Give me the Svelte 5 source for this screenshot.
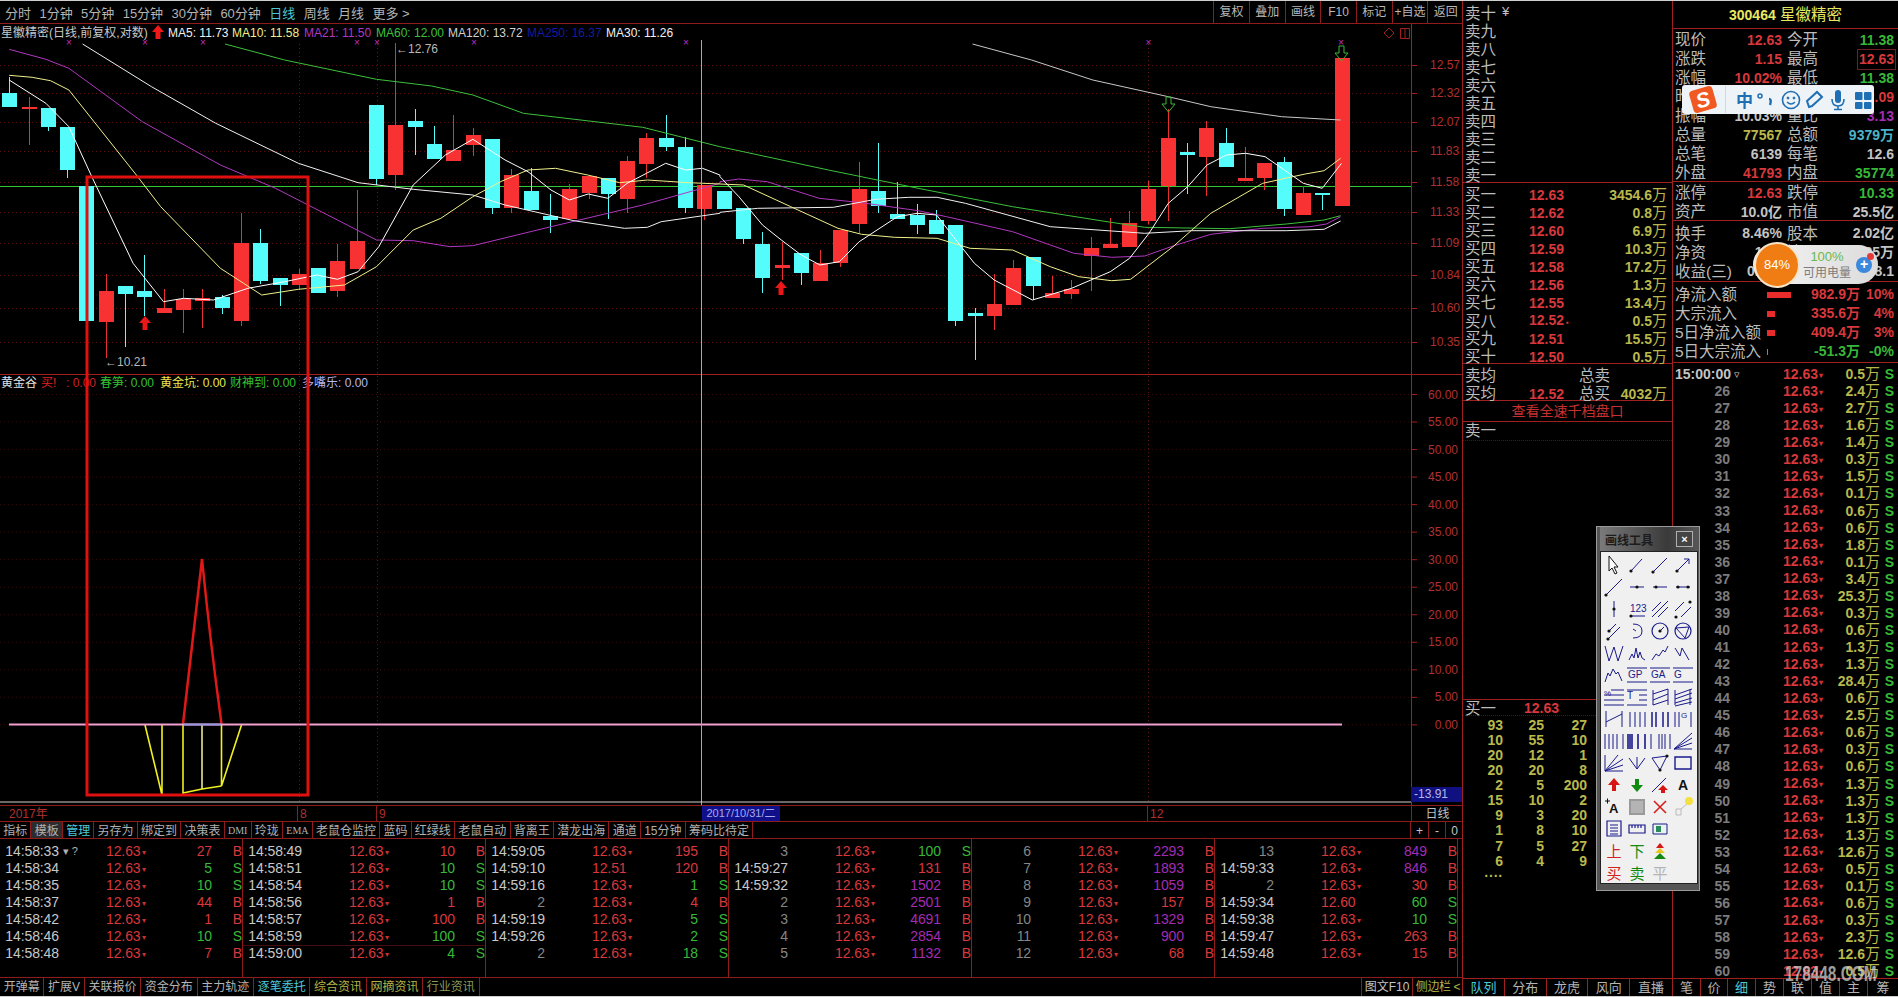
<script>
  // candles: [wickTop, wickBottom, bodyTop, bodyBottom, colour] in page px, one every 19.31px
  const candles = [
    [77,107,93,107,'c'],[97,145,107,109,'r'],[108,131,108,127,'c'],[127,178,127,170,'c'],[186,321,186,321,'c'],
    [274,358,291,322,'r'],[286,347,286,294,'c'],[255,316,291,297,'c'],[289,313,308,313,'r'],[289,333,299,310,'r'],
    [289,328,298,301,'r'],[295,314,297,308,'c'],[213,326,243,321,'r'],[229,284,243,281,'c'],[278,306,278,285,'c'],
    [269,290,274,285,'r'],[268,293,268,293,'c'],[244,297,261,291,'r'],[190,269,241,269,'r'],[105,185,105,179,'c'],
    [43,190,125,175,'r'],[109,155,121,127,'c'],[126,159,144,159,'c'],[115,161,150,161,'r'],[128,156,135,145,'r'],
    [139,214,139,208,'c'],[169,213,175,208,'r'],[168,210,191,210,'c'],[194,233,216,220,'c'],[184,220,189,219,'r'],
    [176,199,176,193,'r'],[178,219,178,194,'c'],[156,213,161,199,'r'],[133,178,138,164,'r'],[115,151,138,147,'c'],
    [137,213,147,208,'c'],[185,220,185,209,'r'],[191,209,191,209,'c'],[208,244,208,239,'c'],[232,293,244,278,'c'],
    [242,280,265,268,'r'],[253,285,253,273,'c'],[250,281,263,281,'r'],[230,267,230,263,'r'],[162,233,189,224,'r'],
    [143,213,191,206,'c'],[182,219,214,219,'c'],[204,234,215,225,'c'],[210,234,220,234,'c'],[225,326,225,321,'c'],
    [308,360,313,316,'c'],[274,330,304,316,'r'],[260,305,268,305,'r'],[257,300,257,286,'c'],[276,298,293,298,'r'],
    [280,299,289,294,'r'],[237,291,248,256,'r'],[218,248,244,248,'r'],[211,247,223,247,'r'],[181,224,189,221,'r'],
    [109,221,138,186,'r'],[143,194,152,155,'c'],[121,196,128,157,'r'],[128,167,143,167,'c'],[147,181,178,181,'r'],
    [163,190,163,178,'r'],[157,216,162,209,'c'],[186,215,193,215,'r'],[193,210,193,194,'c'],[58,206,58,206,'r']
  ];
  const candleX = (i) => 9.2 + i * 19.31;

  // moving averages, traced from the reference. left half / right half have different crop scales
  const a = (p) => p.map(([x, y]) => `${(x / 2.178).toFixed(1)},${(y / 3).toFixed(1)}`).join(' ');
  const b = (p) => p.map(([x, y]) => `${(720 + x / 2.119).toFixed(1)},${(y / 3).toFixed(1)}`).join(' ');
  const averages = [
    { color: '#3cc03c', pts: a([[490,132],[620,180],[820,238],[940,258],[1030,285],[1140,340],[1400,382],[1568,440]]) + ' ' + b([[0,440],[230,510],[420,565],[620,620],[820,665],[900,682],[1080,686],[1200,672],[1280,660],[1315,647]]) },
    { color: '#b038c0', pts: a([[20,148],[100,178],[150,205],[310,365],[480,495],[600,565],[820,720],[900,722],[980,740],[1030,737],[1200,680],[1400,615],[1568,550]]) + ' ' + b([[0,545],[40,537],[100,545],[210,595],[300,608],[420,632],[480,650],[620,695],[750,760],[830,772],[900,768],[960,738],[1040,703],[1150,685],[1250,680],[1285,672],[1315,650]]) },
    { color: '#f0f0f0', pts: a([[180,132],[330,260],[470,370],[650,490],[780,548],[900,568],[1030,585],[1100,615],[1250,662],[1360,685],[1410,682],[1440,665],[1568,640]]) + ' ' + b([[0,637],[80,625],[240,622],[330,598],[400,592],[460,592],[520,610],[700,680],[900,700],[1000,692],[1100,692],[1200,692],[1280,688],[1315,663]]) },
    { color: '#c8c8c8', pts: b([[535,132],[660,180],[790,240],[950,290],[1040,320],[1190,350],[1315,360]]) },
    { color: '#f0f08c', pts: a([[20,226],[70,232],[110,242],[150,270],[300,530],[350,620],[480,805],[570,885],[650,868],[750,855],[820,800],[900,690],[960,655],[1030,590],[1090,545],[1150,510],[1210,505],[1280,525],[1350,548],[1410,540],[1500,548],[1568,552]]) + ' ' + b([[0,552],[50,555],[150,620],[250,685],[300,703],[370,712],[460,715],[530,745],[620,750],[700,800],[760,830],[830,842],[870,838],[960,740],[1040,640],[1150,550],[1240,522],[1280,512],[1315,475]]) },
    { color: '#ffffff', pts: a([[20,240],[100,310],[150,380],[200,530],[290,790],[356,905],[400,895],[465,900],[540,865],[620,845],[690,825],[735,838],[780,815],[825,740],[900,555],[970,465],[1030,418],[1100,480],[1150,515],[1200,570],[1240,600],[1281,582],[1324,595],[1366,550],[1408,520],[1450,490],[1493,510],[1530,505],[1568,525]]) + ' ' + b([[0,530],[40,590],[90,675],[130,720],[172,765],[212,795],[253,785],[295,725],[376,650],[418,640],[459,645],[500,720],[539,790],[581,840],[662,900],[745,865],[827,815],[868,775],[909,700],[950,610],[991,560],[1032,495],[1073,465],[1114,460],[1155,470],[1196,510],[1236,550],[1276,565],[1317,490]]) }
  ];

  const priceAxis = [['12.57',65],['12.32',93],['12.07',122],['11.83',151],['11.58',182],['11.33',212],['11.09',243],['10.84',275],['10.60',308],['10.35',342]];
  const lowerAxis = ['60.00','55.00','50.00','45.00','40.00','35.00','30.00','25.00','20.00','15.00','10.00','5.00','0.00'];
  const marks = [69,145,203,357,377,474,686,1148.5,1341];
  const legend = [
    ['MA5: 11.73','#f2f2f2',168],['MA10: 11.58','#f0f08c',232],['MA21: 11.50','#b038c0',304],['MA60: 12.00','#3cc03c',376],
    ['MA120: 13.72','#d0d0d0',448],['MA250: 16.37','#101ca8',527],['MA30: 11.26','#f2f2f2',606]
  ];

  const periods = [['分时'],['1分钟'],['5分钟'],['15分钟'],['30分钟'],['60分钟'],['日线',true],['周线'],['月线'],['更多 >']];
  const actions = ['复权','叠加','画线','F10','标记','+自选','返回'];
  const tools = [['指标'],['模板',0,'on'],['管理',0,'cyan'],['另存为'],['绑定到'],['决策表'],['DMI',1],['玲珑'],['EMA',1],['老鼠仓监控'],['蓝码'],['红绿线'],['老鼠自动'],['背离王'],['潜龙出海'],['通道'],['15分钟'],['筹码比待定']];
  const infoTabs = [['开弹幕',''],['扩展V',''],['关联报价',''],['资金分布',''],['主力轨迹',''],['逐笔委托','cyan'],['综合资讯','olive'],['网摘资讯','olive'],['行业资讯','olive2']];

  // time, price, volume, side
  const P = '12.63';
  const trades = [
    [['14:58:33',P,27,'B','▾ ?'],['14:58:34',P,5,'S'],['14:58:35',P,10,'S'],['14:58:37',P,44,'B'],['14:58:42',P,1,'B'],['14:58:46',P,10,'S'],['14:58:48',P,7,'B']],
    [['14:58:49',P,10,'B'],['14:58:51',P,10,'S'],['14:58:54',P,10,'S'],['14:58:56',P,1,'B'],['14:58:57',P,100,'B'],['14:58:59',P,100,'S','','dot'],['14:59:00',P,4,'S']],
    [['14:59:05',P,195,'B'],['14:59:10','12.51',120,'B'],['14:59:16',P,1,'S'],['2',P,4,'B'],['14:59:19',P,5,'S'],['14:59:26',P,2,'S'],['2',P,18,'S']],
    [['3',P,100,'S'],['14:59:27',P,131,'B'],['14:59:32',P,1502,'B'],['2',P,2501,'B'],['3',P,4691,'B'],['4',P,2854,'B'],['5',P,1132,'B']],
    [['6',P,2293,'B'],['7',P,1893,'B'],['8',P,1059,'B'],['9',P,157,'B'],['10',P,1329,'B'],['11',P,900,'B'],['12',P,68,'B']],
    [['13',P,849,'B'],['14:59:33',P,846,'B'],['2',P,30,'B'],['14:59:34','12.60',60,'S'],['14:59:38',P,10,'S'],['14:59:47',P,263,'B'],['14:59:48',P,15,'B']]
  ];
  const volClass = (v, s) => (s === 'S' ? 'green' : v >= 500 ? 'purple' : 'red');

  const sells = ['卖十','卖九','卖八','卖七','卖六','卖五','卖四','卖三','卖二','卖一'];
  const buys = [['买一','12.63','3454.6'],['买二','12.62','0.8'],['买三','12.60','6.9'],['买四','12.59','10.3'],['买五','12.58','17.2'],['买六','12.56','1.3'],['买七','12.55','13.4'],['买八','12.52','0.5'],['买九','12.51','15.5'],['买十','12.50','0.5']];
  const queue = [[93,25,27],[10,55,10],[20,12,1],[20,20,8],[2,5,200],[15,10,2],[9,3,20],[1,8,10],[7,5,27],[6,4,9]];

  const quote = [
    ['现价','12.63','red','今开','11.38','green'],['涨跌','1.15','red','最高','12.63','red boxed'],['涨幅','10.02%','red','最低','11.38','green'],
    ['昨收','11.48','light','均价','12.09','red'],['振幅','10.03%','light','量比','3.13','purple'],['总量','77567','yellow','总额','9379万','cyan'],
    ['总笔','6139','light','每笔','12.6','light'],['外盘','41793','red','内盘','35774','green']
  ];
  const limits = [['涨停','12.63','red','跌停','10.33','green'],['资产','10.0亿','light','市值','25.5亿','light']];
  const ratios = [['换手','8.46%','light','股本','2.02亿','light'],['净资','1.98','light','流通','1.35万','light'],['收益(三)','0.247','light','市盈','38.1','light']];
  const flows = [['净流入额',24,'982.9万','10%','red'],['大宗流入',8,'335.6万','4%','red'],['5日净流入额',8,'409.4万','3%','red'],['5日大宗流入',1,'-51.3万','-0%','green']];

  const ticks = [0.5,2.4,2.7,1.6,1.4,0.3,1.5,0.1,0.6,0.6,1.8,0.1,3.4,25.3,0.3,0.6,1.3,1.3,28.4,0.6,2.5,0.6,0.3,0.6,1.3,1.3,1.3,1.3,12.6,0.5,0.1,0.6,0.3,2.3,12.6,0.5];
  const sideTabs = [['队列',42,1],['分布',42],['龙虎',42],['风向',42],['直播',43],['笔',28],['价',27],['细',28,1],['势',28],['联',28],['值',28],['主',28],['筹',31]];

  // drawing palette, 4 columns by 15 rows
  const ink = '#1a1a8c';
  const icons = [
    [{ d:'M-5,-9V6L-2,3L1,9L3,8L0,2H4Z', stroke:'#111', fill:'#fff' }, { d:'M-6,6L5,-6', dots:[[-6,6]] }, { d:'M-7,7L7,-7', dots:[[-7,7]] }, { d:'M-6,6L6,-6M1,-6H6V-1', dots:[[-6,6]] }],
    [{ d:'M-8,8L8,-8', dots:[[-8,8]] }, { d:'M-7,0H7', dots:[[0,0]] }, { d:'M-7,0H7', dots:[[-4,0]] }, { d:'M-7,0H7', dots:[[-5,0],[5,0]] }],
    [{ d:'M0,-8V8', dots:[[0,0]] }, { d:'M-6,7H8', dots:[[-6,7]], txt:'123', tx:-7, ty:3, ts:10 }, { d:'M-8,2L1,-7M-8,8L8,-8M-2,8L8,-2' }, { d:'M-8,2L1,-7M-2,8L8,-2', dots:[[-7,8],[7,-7]] }],
    [{ d:'M-6,1L2,-7M-6,8L6,-4', dots:[[-6,8],[-5,0]] }, { d:'M-4,-7Q5,-7 5,0Q5,7 -4,7M-4,-2L-1,0' }, { d:'M0,0L4,-4', circle:8, dots:[[0,0]] }, { d:'M-7,-3L6,-4L2,7Z', circle:8 }],
    [{ d:'M-9,-7L-5,8L0,-6L4,8L9,-7' }, { d:'M-8,7L-5,1L-3,5L-1,-5L1,5L3,-1L5,5L8,7' }, { d:'M-8,7L-4,1L-1,3L3,-3L5,-1L8,-7' }, { d:'M-8,-5L-3,3L-1,-5L6,7' }],
    [{ d:'M-9,7L-6,-2L-4,1L-1,-6L2,-1L4,-3L8,6' }, { d:'M-10,-7H10M-10,7H10', txt:'GP', tx:-9, ty:3, ts:10 }, { d:'M-10,-7H10M-10,7H10', txt:'GA', tx:-9, ty:3, ts:10 }, { d:'M-10,-7H10M-10,7H10', txt:'G', tx:-9, ty:3, ts:10 }],
    [{ d:'M-10,-2H10M-10,3H10M-10,8H10M-3,-7H10', txt:'%', tx:-10, ty:-1, ts:8 }, { d:'M-10,-7H10M-10,8H10M2,-2H10M2,3H10', txt:'T', tx:-10, ty:2, ts:10 }, { d:'M-7,-7V8M8,-8V8M-7,-3L8,-8M-7,3L8,-3M-7,8L8,3' }, { d:'M-8,-7V8M7,-8V8M-8,-2L9,-8M-8,2L9,-4M-8,6L9,1M-8,9L9,5' }],
    [{ d:'M-8,-8V8M8,-8V8M-8,3L8,-5' }, { d:'M-7,-7V8M-2,-7V8M3,-7V8M8,-7V8' }, { d:'M-8,-7V8M-4,-7V8M3,-7V8M8,-7V8', w:1.5 }, { d:'M-8,-7V8M-4,-7V8M8,-7V8', txt:'G', tx:-2, ty:-1, ts:8 }],
    [{ d:'M-9,-7V8M-5,-7V8M-1,-7V8M3,-7V8M9,-7V8' }, { d:'M-9,-7V8M-7,-7V8M-5,-7V8M1,-7V8M8,-7V8', w:1.6 }, { d:'M-9,-7V8M-1,-7V8M2,-7V8M5,-7V8M10,-7V8' }, { d:'M-9,8L9,-8M-9,8L9,-3M-9,8L9,2M-9,8H9' }],
    [{ d:'M-9,-8V8H9M-9,8L4,-8M-9,8L9,-4M-9,8L9,2' }, { d:'M-8,-5L0,6L8,-5M0,6V-6' }, { d:'M-8,-5L7,-7L0,7Z', dots:[[7,-7],[0,7]] }, { d:'M-8,-6H8V6H-8Z', w:1.4 }],
    [{ d:'M0,-7L6,0H2V6H-2V0H-6Z', stroke:'none', fill:'#d81414' }, { d:'M0,7L6,0H2V-6H-2V0H-6Z', stroke:'none', fill:'#128a12' }, { d:'M-8,7L6,-7', red:'M3,0L8,5H5V8H1V5H-2Z' }, { txt:'A', tx:-5, ty:5, ts:14, color:'#111', bold:1 }],
    [{ d:'M-9,-6H-4M-6.5,-8.5V-3.5', stroke:'#111', txt:'A', tx:-5, ty:6, ts:13, color:'#111', bold:1 }, { d:'M-7,-7H7V7H-7Z', stroke:'#9a9a9a', fill:'#b4b4b4', w:2 }, { d:'M-6,-6L6,6M6,-6L-6,6', stroke:'#d42020', w:1.6 }, { d:'M-7,2H-2V8H-7ZM-2,2L5,-4', stroke:'#bbb', yellow:1 }],
    [{ d:'M-7,-8H7V7H-7ZM-4,-4H4M-4,-1H4M-4,2H4M-4,5H4', w:1.2 }, { d:'M-8,-4H8V4H-8ZM-5,-4V-1M-2,-4V-1M1,-4V-1M4,-4V-1', w:1.2 }, { d:'M-7,-5H7V5H-7Z', stroke:'#1a1a8c', fill:'#e8f4ee', inner:1 }, {}],
    [{ cjk:'上', color:'#d42020' }, { cjk:'下', color:'#128a12' }, { tri:1 }, {}],
    [{ cjk:'买', color:'#d42020' }, { cjk:'卖', color:'#128a12' }, { cjk:'平', color:'#b4b4b4' }, {}]
  ];
</script>

<div class="app">
  <div class="left">
    <div class="toolbar">
      <div class="periods">
        {#each periods as [label, active]}<span class:cyan={active}>{label}</span>{/each}
      </div>
      <div class="actions">
        {#each actions as label}<span>{label}</span>{/each}
      </div>
    </div>

    <svg class="chart" viewBox="0 24 1463 781" width="1463" height="781" role="img" aria-label="K线图">
      <!-- price grid -->
      {#each priceAxis as [label, y]}
        <line x1="0" x2="1411" y1={y + 0.5} y2={y + 0.5} class="grid" />
        <line x1="1411" x2="1417" y1={y + 0.5} y2={y + 0.5} class="axis" />
        <text x="1430" y={y + 4} class="tick">{label}</text>
      {/each}
      {#each lowerAxis as label, i}
        <line x1="0" x2="1411" y1={394.5 + i * 27.53} y2={394.5 + i * 27.53} class="grid faint" />
        <line x1="1411" x2="1417" y1={394.5 + i * 27.53} y2={394.5 + i * 27.53} class="axis" />
        <text x="1458" y={398.5 + i * 27.53} class="tick end">{label}</text>
      {/each}
      {#each [299.5, 377.5, 1148.5] as x}
        <line x1={x} x2={x} y1="44" y2="804" class="grid vert" />
      {/each}

      <line x1="0" x2="1411" y1="186.5" y2="186.5" stroke="#32c832" stroke-width="1" />

      {#each candles as [wt, wb, bt, bb, c], i}
        {@const x = candleX(i)}
        <line x1={Math.round(x) + 0.5} x2={Math.round(x) + 0.5} y1={wt} y2={wb} class={c === 'c' ? 'wick-c' : 'wick-r'} />
        <rect x={Math.round(x) - 7} y={bt} width="15" height={Math.max(bb - bt, 2)} fill={c === 'c' ? '#54fcfc' : '#f83232'} />
      {/each}

      {#each averages as line}
        <polyline points={line.pts} fill="none" stroke={line.color} stroke-width="1" stroke-linejoin="round" />
      {/each}

      {#each marks as x}
        <text x={x} y="46" class="mark">×</text>
      {/each}

      <!-- signal arrows -->
      <path d="M158,25l6,7h-3.5v7h-5v-7h-3.5z" fill="#f01818" />
      <path d="M145,316l6,7h-3.5v7h-5v-7h-3.5z" fill="#e81818" />
      <path d="M781,281l6,7h-3.5v7h-5v-7h-3.5z" fill="#e81818" />
      <path d="M1166,97h5v7h4l-6.5,8l-6.5,-8h4z" fill="none" stroke="#38b838" />
      <path d="M1339,46h5v7h4l-6.5,8l-6.5,-8h4z" fill="none" stroke="#38b838" />

      <text x="396" y="53" class="note">←12.76</text>
      <text x="105" y="366" class="note">←10.21</text>

      <text x="1" y="37" class="title">星徽精密(日线,前复权,对数)</text>
      {#each legend as [label, color, x]}
        <text x={x} y="37" class="legend" fill={color}>{label}</text>
      {/each}
      <path d="M1389,28l5,5l-5,5l-5,-5z" fill="none" stroke="#a02020" />
      <path d="M1400.5,28.5h9v10h-9zM1405,28.5v10" fill="none" stroke="#a02020" />

      <!-- panel split -->
      <line x1="0" x2="1463" y1="374.5" y2="374.5" class="axis" />
      <line x1="1411.5" x2="1411.5" y1="24" y2="805" class="axis" />

      <text x="1" y="387" class="sub" fill="#e4e4e4">黄金谷</text>
      <text x="41" y="387" class="sub" fill="#e02020">买!</text>
      <text x="66" y="387" class="legend" fill="#d02020">: 0.00</text>
      <text x="100" y="387" class="sub" fill="#34c034">春笋<tspan class="legend">: 0.00</tspan></text>
      <text x="160" y="387" class="sub" fill="#e8e850">黄金坑<tspan class="legend">: 0.00</tspan></text>
      <text x="230" y="387" class="sub" fill="#34c034">财神到<tspan class="legend">: 0.00</tspan></text>
      <text x="302" y="387" class="sub" fill="#b8b8f0">多嘴乐<tspan class="legend">: 0.00</tspan></text>

      <!-- indicator -->
      <path d="M183,724Q193,640 202,559Q210,640 221.5,724" fill="none" stroke="#e01818" stroke-width="2.5" />
      <g fill="none" stroke="#f0f020" stroke-width="1.6">
        <path d="M145,725L162,795V725" />
        <path d="M183,725V794" />
        <path d="M202,725V789" stroke="#e8e890" />
        <path d="M221.5,725V786L241.5,725" />
        <path d="M183,793L202,789L221.5,786" />
      </g>
      <line x1="9" x2="1342" y1="724.5" y2="724.5" stroke="#f0a0d0" stroke-width="2" />
      <line x1="184" x2="221" y1="724.5" y2="724.5" stroke="#9898e0" stroke-width="2" />

      <line x1="701.5" x2="701.5" y1="40" y2="805" stroke="#a8a8a8" />
      <line x1="0" x2="1411" y1="802" y2="802" stroke="#d0d0d0" />
      <rect x="1411" y="787" width="52" height="15" fill="#101080" />
      <text x="1414" y="798" class="tick box-tick">-13.91</text>

      <!-- hand drawn box from whoever took this screenshot -->
      <rect x="87" y="177" width="221" height="618" fill="none" stroke="#e01010" stroke-width="3" />
    </svg>

    <div class="dates">
      <span class="year">2017年</span>
      <span class="mon m8">8</span>
      <span class="mon m9">9</span>
      <span class="cursor-date">2017/10/31/二</span>
      <span class="mon m12">12</span>
      <span class="unit">日线</span>
    </div>

    <div class="tools">
      <div class="tool-list">
        {#each tools as [label, small, kind]}
          <span class={kind} class:small>{label}</span>
        {/each}
      </div>
      <div class="zoom-btns"><span>+</span><span>-</span><span>0</span></div>
    </div>

    <div class="trades">
      {#each trades as col}
        <div class="trade-col">
          {#each col as [time, price, vol, side, extra, dot]}
            <div class="trade" class:dot>
              <span class={time.length < 8 ? 'seq' : 'time'}>{time}</span>
              <span class="extra">{extra || ''}</span>
              <span class="red price">{price}{#if price === P}<i>▾</i>{/if}</span>
              <span class="vol {volClass(vol, side)}">{vol}</span>
              <span class="side {side === 'S' ? 'green' : 'red'}">{side}</span>
            </div>
          {/each}
        </div>
      {/each}
    </div>

    <div class="foot">
      <div class="foot-tabs">
        {#each infoTabs as [label, kind]}<span class={kind}>{label}</span>{/each}
      </div>
      <div class="foot-right"><span>图文F10</span><span class="olive side-toggle">侧边栏 &lt;</span></div>
    </div>
  </div>

  <div class="mid">
    <div class="sell-rows">
      {#each sells as s, i}
        <div class="book-row"><span class="cn">{s}</span>{#if i === 0}<span class="yen">¥</span>{/if}</div>
      {/each}
    </div>
    <div class="buy-rows">
      {#each buys as [label, price, vol], i}
        <div class="book-row">
          <span class="cn">{label}</span>
          <span class="num red">{price}{#if i === 7}<i class="pip">▪</i>{/if}</span>
          <span class="num yellow amount">{vol}<b>万</b></span>
        </div>
      {/each}
    </div>
    <div class="totals">
      <div class="book-row"><span class="cn">卖均</span><span></span><span class="cn tot">总卖</span></div>
      <div class="book-row">
        <span class="cn">买均</span><span class="num red">12.52</span>
        <span class="cn tot">总买<span class="num yellow">4032<b>万</b></span></span>
      </div>
    </div>
    <div class="full-depth">查看全速千档盘口</div>
    <div class="sell-one"><span class="cn">卖一</span></div>
    <div class="spacer"></div>
    <div class="buy-one"><span class="cn">买一</span><span class="num red">12.63</span></div>
    <div class="queue">
      {#each queue as row}
        {#each row as n}<span class="num yellow">{n}</span>{/each}
      {/each}
      <span class="num yellow">····</span>
    </div>
    <div class="mid-foot">
      {#each sideTabs.slice(0, 5) as [label, w, on]}<span class:cyan={on} style="width:{w - 1}px">{label}</span>{/each}
    </div>
  </div>

  <div class="right">
    <div class="stock"><b>300464</b> 星徽精密</div>
    <div class="block quote">
      {#each quote as [l1, v1, c1, l2, v2, c2]}
        <div class="stat"><span class="cn">{l1}</span><span class="num {c1}">{v1}</span><span class="cn l2">{l2}</span><span class="num {c2}">{v2}</span></div>
      {/each}
    </div>
    <div class="block">
      {#each limits as [l1, v1, c1, l2, v2, c2]}
        <div class="stat"><span class="cn">{l1}</span><span class="num {c1}">{v1}</span><span class="cn l2">{l2}</span><span class="num {c2}">{v2}</span></div>
      {/each}
    </div>
    <div class="block pad">
      {#each ratios as [l1, v1, c1, l2, v2, c2]}
        <div class="stat"><span class="cn">{l1}</span><span class="num {c1}">{v1}</span><span class="cn l2">{l2}</span><span class="num {c2}">{v2}</span></div>
      {/each}
    </div>
    <div class="block pad flows">
      {#each flows as [label, w, val, pct, c]}
        <div class="flow">
          <span class="cn">{label}</span>
          <span class="flow-mid"><i class="bar {c}-bar" style="width:{w}px"></i><span class="num {c}">{val}</span></span>
          <span class="num {c}">{pct}</span>
        </div>
      {/each}
    </div>
    <div class="ticks">
      {#each ticks as v, i}
        <div class="tick-row">
          {#if i === 0}<span class="num light">15:00:00</span><span class="tri">▿</span>
          {:else}<span class="num seq2">{i + 25}</span><span></span>{/if}
          <span class="num red">12.63<i>▾</i></span>
          <span class="num yellow">{v}<b>万</b></span>
          <span class="num green">S</span>
        </div>
      {/each}
    </div>
    <div class="right-foot">
      {#each sideTabs.slice(5) as [label, w, on]}<span class:cyan={on} style="width:{w - 1}px">{label}</span>{/each}
    </div>
  </div>

  <!-- drawing palette window -->
  <div class="palette">
    <div class="pal-title"><span>画线工具</span><button aria-label="关闭">×</button></div>
    <svg class="pal-icons" width="96" height="331" viewBox="0 0 96 331">
      {#each icons as row, r}
        {#each row as ic, c}
          <g transform="translate({13 + c * 23},{13 + r * 22})">
            {#if ic.circle}<circle r={ic.circle} fill="none" stroke={ink} stroke-width="1.2" />{/if}
            {#if ic.d}<path d={ic.d} fill={ic.fill || 'none'} stroke={ic.stroke || ink} stroke-width={ic.w || 1} />{/if}
            {#each ic.dots || [] as [dx, dy]}<circle cx={dx} cy={dy} r="1.6" fill="#111" />{/each}
            {#if ic.txt}<text x={ic.tx} y={ic.ty} font-size={ic.ts} fill={ic.color || ink} font-weight={ic.bold ? 700 : 400} class="pal-txt">{ic.txt}</text>{/if}
            {#if ic.red}<path d={ic.red} fill="#d81414" />{/if}
            {#if ic.yellow}<circle cx="6" cy="-6" r="4" fill="#f4e040" />{/if}
            {#if ic.inner}<rect x="-4" y="-3" width="5" height="6" fill="#2a8a5a" />{/if}
            {#if ic.cjk}<text x="0" y="6" font-size="15" fill={ic.color} text-anchor="middle" class="pal-txt">{ic.cjk}</text>{/if}
            {#if ic.tri}
              <path d="M0,-8L4,-3H-4Z" fill="#d81414" /><path d="M0,-3L5,2H-5Z" fill="#e8c820" /><path d="M0,2L6,8H-6Z" fill="#128a12" />
            {/if}
          </g>
        {/each}
      {/each}
    </svg>
  </div>

  <!-- input method bar -->
  <div class="ime">
    <span class="ime-logo"><b>S</b></span>
    <span class="ime-sep"></span>
    <span class="ime-zh">中</span>
    <svg width="192" height="29" viewBox="0 0 192 29" class="ime-icons">
      <g fill="#1f6fb4" stroke="#1f6fb4">
        <circle cx="78" cy="11" r="2" fill="none" stroke-width="1.5" />
        <path d="M87,14q3,0 1,6" fill="none" stroke-width="2.4" />
        <circle cx="109" cy="15" r="8.5" fill="none" stroke-width="1.6" />
        <circle cx="106" cy="13" r="1" /><circle cx="112" cy="13" r="1" />
        <path d="M105,17q4,4 8,0" fill="none" stroke-width="1.3" />
        <path d="M127,22l-2,-6l10,-9l5,5l-10,9z" fill="none" stroke-width="2" />
        <rect x="153" y="5" width="6" height="13" rx="3" stroke="none" />
        <path d="M150,14q0,7 6,7q6,0 6,-7M156,21v3M152,24.5h8" fill="none" stroke-width="1.6" />
        <rect x="173" y="7" width="7.5" height="8" rx="1" stroke="none" />
        <rect x="182" y="7" width="7.5" height="8" rx="1" stroke="none" />
        <rect x="173" y="17" width="7.5" height="7" rx="1" stroke="none" />
        <rect x="182" y="17" width="7.5" height="7" rx="1" stroke="none" />
      </g>
    </svg>
  </div>

  <!-- battery popup -->
  <div class="battery">
    <div class="bat-ring">84%</div>
    <div class="bat-text"><span class="bat-full">100%</span><span class="bat-label">可用电量</span></div>
    <div class="bat-plus">+<i></i></div>
  </div>

  <div class="watermark">178448.COM</div>
</div>

<style>
  :global(body) {
    margin: 0;
    background: #000;
  }

  .app {
    position: relative;
    display: grid;
    grid-template-columns: 1462px 211px 225px;
    width: 1898px;
    height: 997px;
    box-sizing: border-box;
    border-top: 1px solid #cfcfcf;
    border-bottom: 1px solid #cfcfcf;
    background: #000;
    overflow: hidden;
    color: #c4c4c4;
    font-family: "Liberation Sans", "Noto Sans CJK SC", sans-serif;
    font-size: 12px;
  }

  .left {
    display: flex;
    flex-direction: column;
    min-width: 0;
  }

  .toolbar {
    display: flex;
    justify-content: space-between;
    height: 22px;
    flex: none;
    border-bottom: 1px solid #8e1c1c;
    width: 1463px;
  }

  .periods {
    display: flex;
    align-items: center;
    gap: 8.4px;
    padding-left: 5px;
    font-size: 13px;
    color: #b4b4b4;
  }

  .cyan { color: #4cc8d8; }

  .actions { display: flex; }

  .actions span {
    width: 35.7px;
    box-sizing: border-box;
    border-left: 1px solid #8e1c1c;
    text-align: center;
    line-height: 22px;
    color: #b8b8b8;
  }

  .chart {
    display: block;
    flex: none;
    width: 1463px;
  }

  .grid {
    stroke: #5a1010;
    stroke-dasharray: 1 3;
  }

  .grid.faint { stroke: #3a0a0a; }

  .grid.vert { stroke: #6a1414; }

  .axis {
    stroke: #a02020;
    stroke-width: 1;
  }

  .tick {
    font-size: 12px;
    fill: #b03030;
  }

  .tick.end { text-anchor: end; }

  .box-tick { fill: #b8b8e8; }

  .mark {
    font-size: 10px;
    fill: #c030c0;
    text-anchor: middle;
  }

  .note {
    font-size: 12px;
    fill: #b8b8b8;
  }

  .title {
    font-size: 12px;
    fill: #c8c8c8;
  }

  .legend { font-size: 12px; }

  .sub { font-size: 12px; }

  .wick-c { stroke: #54fcfc; }

  .wick-r { stroke: #e83030; }

  .dates {
    position: relative;
    height: 17px;
    flex: none;
    box-sizing: border-box;
    border-top: 1px solid #8e1c1c;
    border-bottom: 1px solid #8e1c1c;
    width: 1463px;
    line-height: 17px;
    color: #b03030;
  }

  .dates span { position: absolute; top: 0; height: 15px; }

  .year { left: 9px; }

  .mon { padding-left: 2px; border-left: 1px solid #8e1c1c; }

  .m8 { left: 297px; }

  .m9 { left: 376px; }

  .m12 { left: 1147px; }

  .cursor-date {
    left: 702px;
    width: 78px;
    background: #10108a;
    color: #a8a8f0;
    text-align: center;
    white-space: nowrap;
    font-size: 11px;
    line-height: 15px;
  }

  .unit {
    left: 1411px;
    right: 0;
    border-left: 1px solid #8e1c1c;
    text-align: center;
    color: #c0c0c0;
  }

  .tools {
    display: flex;
    justify-content: space-between;
    height: 17px;
    flex: none;
    box-sizing: border-box;
    border-bottom: 1px solid #8e1c1c;
    width: 1463px;
    line-height: 18px;
  }

  .tool-list { display: flex; height: 16px; }

  .tool-list span {
    padding: 0 3.23px;
    border-right: 1px solid #8e1c1c;
    color: #b0b0b0;
    white-space: nowrap;
  }

  .tool-list .on { background: #2c2c2c; }

  .tool-list .cyan { color: #4cc8d8; }

  .tool-list .small {
    font-size: 10px;
    font-family: "Liberation Serif", serif;
  }

  .zoom-btns { display: flex; height: 16px; }

  .zoom-btns span {
    width: 16.6px;
    border-left: 1px solid #8e1c1c;
    text-align: center;
  }

  .trades {
    display: grid;
    grid-template-columns: repeat(6, 243px);
    height: 139px;
    flex: none;
    box-sizing: border-box;
    border-bottom: 1px solid #8e1c1c;
    width: 1463px;
  }

  .trade-col {
    border-right: 1px solid #8e1c1c;
    padding-top: 4px;
  }

  .trade {
    display: grid;
    grid-template-columns: 56px 47px 48px 58px 30px;
    height: 17px;
    padding-left: 3px;
    line-height: 17px;
    font-size: 14px;
    letter-spacing: -0.1px;
  }

  .trade.dot { box-shadow: 0 1px 0 -0.2px #5a1010; }

  .time { color: #c8c8c8; text-align: right; }

  .seq { color: #868686; text-align: right; }

  .extra {
    font-size: 11px;
    padding-left: 4px;
    color: #b0b0b0;
    white-space: pre;
  }

  .price i,
  .tick-row i {
    font-size: 8px;
    font-style: normal;
    padding-left: 1px;
    color: #c83030;
    vertical-align: 1px;
  }

  .vol { text-align: right; }

  .side { text-align: right; }

  .red { color: #d8383c; }

  .green { color: #38b838; }

  .purple { color: #a42cb4; }

  .yellow { color: #b8b84c; }

  .light { color: #c4c4c4; }

  .foot {
    display: flex;
    justify-content: space-between;
    flex: 1;
    width: 1463px;
    line-height: 19px;
  }

  .foot-tabs { display: flex; height: 18px; }

  .foot-tabs span {
    padding: 0 3.7px;
    border-right: 1px solid #8e1c1c;
    color: #b4b4b4;
  }

  .foot-tabs .cyan { color: #4cc8d8; }

  .foot-tabs .olive, .olive { color: #b4b448; }

  .foot-tabs .olive2 { color: #8c9c58; }

  .foot-right { display: flex; height: 18px; }

  .foot-right span {
    width: 51px;
    box-sizing: border-box;
    border-left: 1px solid #8e1c1c;
    text-align: center;
    white-space: nowrap;
    font-size: 12px;
  }

  .side-toggle { letter-spacing: -0.4px; }

  .cn {
    font-size: 15.5px;
    line-height: 18px;
    color: #bcbcbc;
    white-space: nowrap;
  }

  .num {
    font-size: 14px;
    line-height: 17px;
    font-weight: 700;
    white-space: nowrap;
  }

  .num b {
    font-weight: 400;
    font-size: 15px;
    line-height: 1;
  }

  .mid {
    display: flex;
    flex-direction: column;
    box-sizing: border-box;
    border-left: 1px solid #a02020;
    border-right: 1px solid #a02020;
    min-width: 0;
  }

  .sell-rows { height: 181px; padding-top: 1px; box-sizing: border-box; }

  .book-row {
    position: relative;
    display: grid;
    grid-template-columns: 64px 50px 1fr;
    height: 18px;
    box-sizing: border-box;
    padding: 3px 5px 0 2px;
    align-items: center;
  }

  .yen {
    position: absolute;
    left: 39px;
    top: 2px;
    font-size: 13px;
  }

  .pip {
    font-size: 8px;
    font-style: normal;
    padding-left: 2px;
  }

  .amount { text-align: right; }

  .buy-rows,
  .totals {
    border-top: 1px solid #a02020;
  }

  .tot {
    display: flex;
    justify-content: space-between;
  }

  .tot .num { align-self: center; }

  .full-depth {
    height: 22px;
    flex: none;
    box-sizing: border-box;
    border-top: 1px solid #a02020;
    border-bottom: 1px solid #a02020;
    text-align: center;
    line-height: 20px;
    color: #c83030;
    font-size: 14px;
  }

  .sell-one {
    height: 18px;
    padding-left: 2px;
    border-bottom: 1px dotted #5a1010;
    line-height: 18px;
  }

  .spacer { flex: 1; }

  .buy-one {
    height: 15px;
    display: flex;
    gap: 28px;
    padding-left: 2px;
    border-top: 1px solid #a02020;
    border-bottom: 1px dotted #5a1010;
    line-height: 15px;
  }

  .queue {
    display: grid;
    grid-template-columns: 40px 41px 43px;
    grid-auto-rows: 15.07px;
    padding: 1px 0 0;
    height: 261px;
    text-align: right;
    line-height: 15px;
    width: 124px;
  }

  .mid-foot,
  .right-foot {
    display: flex;
    flex: none;
    height: 18px;
    box-sizing: border-box;
    border-top: 1px solid #a02020;
    line-height: 18px;
    font-size: 13px;
    color: #b4b4b4;
  }

  .mid-foot span,
  .right-foot span {
    box-sizing: content-box;
    border-right: 1px solid #a02020;
    text-align: center;
  }

  .mid-foot span:last-child,
  .right-foot span:last-child { border-right: 0; }

  .mid-foot .cyan,
  .right-foot .cyan { color: #4cc8d8; }

  .right {
    display: flex;
    flex-direction: column;
    min-width: 0;
    overflow: hidden;
  }

  .stock {
    height: 28px;
    flex: none;
    box-sizing: border-box;
    border-bottom: 1px solid #a02020;
    text-align: center;
    line-height: 28px;
    color: #e8e860;
    font-size: 15.5px;
  }

  .stock b { font-size: 14px; }

  .block {
    flex: none;
    box-sizing: border-box;
    border-bottom: 1px solid #a02020;
    padding-left: 2px;
  }

  .pad { padding-top: 1.5px; padding-bottom: 1.5px; }

  .flows { padding-bottom: 2.5px; }

  .stat {
    display: grid;
    grid-template-columns: 34px 73px 39px 73px;
    height: 19px;
    box-sizing: border-box;
    padding-top: 2px;
    align-items: center;
  }

  .stat .num { text-align: right; }

  .l2 { padding-left: 5px; }

  .boxed { outline: 1px solid #6e2020; outline-offset: 1px; justify-self: end; }

  .cyan.num, .num.cyan { color: #4cb4c8; }

  .flow {
    display: grid;
    grid-template-columns: 92px 93px 34px;
    height: 19px;
    box-sizing: border-box;
    padding-top: 2px;
    align-items: center;
  }

  .flow-mid {
    display: flex;
    justify-content: space-between;
    align-items: center;
  }

  .flow > .num { text-align: right; }

  .bar {
    display: block;
    height: 6px;
  }

  .red-bar { background: #e82c2c; }

  .green-bar { background: #38b838; }

  .ticks {
    flex: 1;
    min-height: 0;
    padding: 2.5px 0 0 2px;
    overflow: hidden;
  }

  .tick-row {
    display: grid;
    grid-template-columns: 55px 53px 45px 52px 14px;
    height: 17.07px;
    align-items: center;
  }

  .tick-row > .yellow,
  .tick-row > .green,
  .seq2 { text-align: right; }

  .seq2 { color: #7c7c7c; }

  .tri {
    font-size: 11px;
    padding-left: 4px;
  }

  .right-foot { background: #000; position: relative; }

  .palette {
    position: absolute;
    left: 1596px;
    top: 525px;
    width: 104px;
    height: 365px;
    box-sizing: border-box;
    border: 1px solid #9a9a9a;
    background: #555;
    padding: 0 3px 3px;
  }

  .pal-title {
    display: flex;
    justify-content: space-between;
    align-items: center;
    height: 24px;
    padding: 0 3px 0 5px;
    background: linear-gradient(90deg, #7a7a7a, #3a3a3a 70%, #555);
    color: #1c1c1c;
    font-size: 12px;
    font-weight: 700;
  }

  .pal-title button {
    width: 17px;
    height: 16px;
    padding: 0;
    border: 1px solid #b0b0b0;
    background: #444;
    color: #fff;
    font-size: 11px;
    font-weight: 700;
    line-height: 13px;
  }

  .pal-icons {
    display: block;
    box-sizing: content-box;
    border: 1px solid #222;
    background: #f0f0f0;
  }

  .pal-txt {
    font-family: "Liberation Sans", "Noto Sans CJK SC", sans-serif;
  }

  .ime {
    position: absolute;
    left: 1682px;
    top: 84px;
    width: 192px;
    height: 29px;
    display: flex;
    align-items: center;
    background: #eef3f8;
    border-radius: 3px;
  }

  .ime-logo {
    width: 24px;
    height: 23px;
    margin-left: 9px;
    border-radius: 4px;
    background: #f05a22;
    transform: rotate(-16deg);
    color: #fff;
    text-align: center;
    font-size: 21px;
    line-height: 23px;
    font-style: italic;
  }

  .ime-sep {
    width: 1px;
    height: 27px;
    margin: 0 10px;
    background: #d4d8dc;
  }

  .ime-zh {
    color: #1f6fb4;
    font-size: 17px;
    font-weight: 700;
  }

  .ime-icons {
    position: absolute;
    left: 0;
    top: 0;
  }

  .battery {
    position: absolute;
    left: 1753px;
    top: 244px;
    display: flex;
    align-items: center;
    width: 125px;
    height: 39px;
    border-radius: 20px;
    background: linear-gradient(90deg, #f4f4f4, #dcdcdc);
  }

  .bat-ring {
    width: 42px;
    height: 42px;
    margin: 0 0 0 1px;
    flex: none;
    border: 2px solid #f4e4c8;
    border-radius: 50%;
    background: #f07c14;
    color: #fff;
    text-align: center;
    line-height: 42px;
    font-size: 13px;
  }

  .bat-text {
    display: flex;
    flex-direction: column;
    align-items: center;
    margin-left: 3px;
    line-height: 17px;
  }

  .bat-full {
    color: #6cb84c;
    font-size: 13px;
  }

  .bat-label {
    color: #7c7c7c;
    font-size: 12px;
  }

  .bat-plus {
    position: relative;
    width: 16px;
    height: 16px;
    margin-left: 5px;
    border-radius: 50%;
    background: #3c88dc;
    color: #fff;
    text-align: center;
    line-height: 15px;
    font-size: 14px;
    font-weight: 700;
  }

  .bat-plus i {
    position: absolute;
    right: -2px;
    top: -4px;
    width: 7px;
    height: 7px;
    border-radius: 50%;
    background: #e03c3c;
  }

  .watermark {
    position: absolute;
    left: 1785px;
    top: 960px;
    color: rgba(210, 210, 210, 0.75);
    font-size: 22px;
    font-weight: 700;
    font-family: "Liberation Sans", sans-serif;
    white-space: nowrap;
    transform: scaleX(0.7);
    transform-origin: left center;
  }
</style>
